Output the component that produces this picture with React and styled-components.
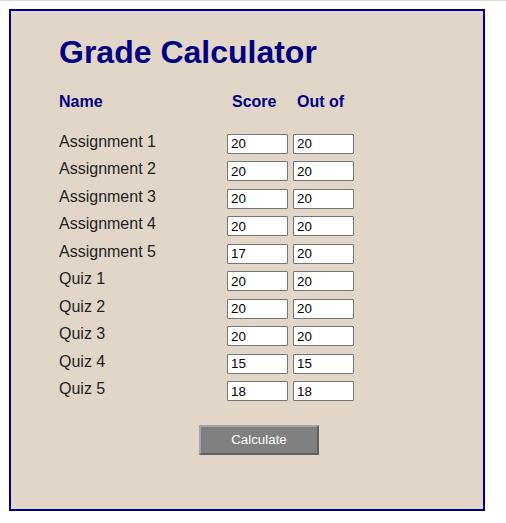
import React, { useState } from 'react'
import styled, { createGlobalStyle } from 'styled-components'

const GlobalStyle = createGlobalStyle`
  html, body {
    margin: 0;
    padding: 0;
    background: #ffffff;
    font-family: "Liberation Sans", Arial, sans-serif;
  }
`

const TopRule = styled.div`
  height: 1px;
  background: #dadada;
`

const Panel = styled.div`
  box-sizing: border-box;
  width: 476px;
  height: 502px;
  margin: 8px 0 0 9px;
  padding: 23px 0 0 48px;
  background: #e2d6c9;
  border: 2px solid #000080;
`

const Title = styled.h1`
  margin: 0;
  height: 37px;
  font-size: 32px;
  line-height: 37px;
  font-weight: bold;
  color: #000080;
`

const Row = styled.div`
  display: grid;
  grid-template-columns: 168px 66px 66px;
  align-items: start;
  height: ${p => (p.$header ? '18px' : '27.5px')};
`

const HeaderRow = styled(Row)`
  margin-top: 21.5px;
  margin-bottom: 22.3px;
`

const HeadCell = styled.div`
  font-size: 16px;
  line-height: 18px;
  font-weight: bold;
  color: #000080;
  padding-left: ${p => p.$pad || 0}px;
`

const Label = styled.div`
  font-size: 16px;
  line-height: 18px;
  color: #1e1e1e;
`

const Field = styled.input`
  box-sizing: border-box;
  width: 61px;
  height: 20px;
  margin-top: 1px;
  padding: 0 3px;
  border: 1px solid #767676;
  border-radius: 1px;
  background: #ffffff;
  font-family: "Liberation Sans", Arial, sans-serif;
  font-size: 13.33px;
  color: #000000;
  outline: none;
`

const Button = styled.button`
  box-sizing: border-box;
  display: block;
  width: 120px;
  height: 30px;
  margin: 17.2px 0 0 140px;
  padding: 0;
  background: #808080;
  border: 2px solid;
  border-color: #a3a3a3 #5e5e5e #5e5e5e #a3a3a3;
  color: #ffffff;
  font-family: "Liberation Sans", Arial, sans-serif;
  font-size: 13.33px;
  cursor: pointer;
`

const initialRows = [
  { name: 'Assignment 1', score: '20', outOf: '20' },
  { name: 'Assignment 2', score: '20', outOf: '20' },
  { name: 'Assignment 3', score: '20', outOf: '20' },
  { name: 'Assignment 4', score: '20', outOf: '20' },
  { name: 'Assignment 5', score: '17', outOf: '20' },
  { name: 'Quiz 1', score: '20', outOf: '20' },
  { name: 'Quiz 2', score: '20', outOf: '20' },
  { name: 'Quiz 3', score: '20', outOf: '20' },
  { name: 'Quiz 4', score: '15', outOf: '15' },
  { name: 'Quiz 5', score: '18', outOf: '18' },
]

export default function App() {
  const [rows, setRows] = useState(initialRows)

  const update = (i, key, value) => {
    setRows(rows.map((r, j) => (j === i ? { ...r, [key]: value } : r)))
  }

  return (
    <>
      <GlobalStyle />
      <TopRule />
      <Panel>
        <Title>Grade Calculator</Title>
        <HeaderRow $header>
          <HeadCell>Name</HeadCell>
          <HeadCell $pad={5}>Score</HeadCell>
          <HeadCell $pad={4}>Out of</HeadCell>
        </HeaderRow>
        {rows.map((r, i) => (
          <Row key={r.name}>
            <Label>{r.name}</Label>
            <Field value={r.score} onChange={e => update(i, 'score', e.target.value)} />
            <Field value={r.outOf} onChange={e => update(i, 'outOf', e.target.value)} />
          </Row>
        ))}
        <Button type="button">Calculate</Button>
      </Panel>
    </>
  )
}
